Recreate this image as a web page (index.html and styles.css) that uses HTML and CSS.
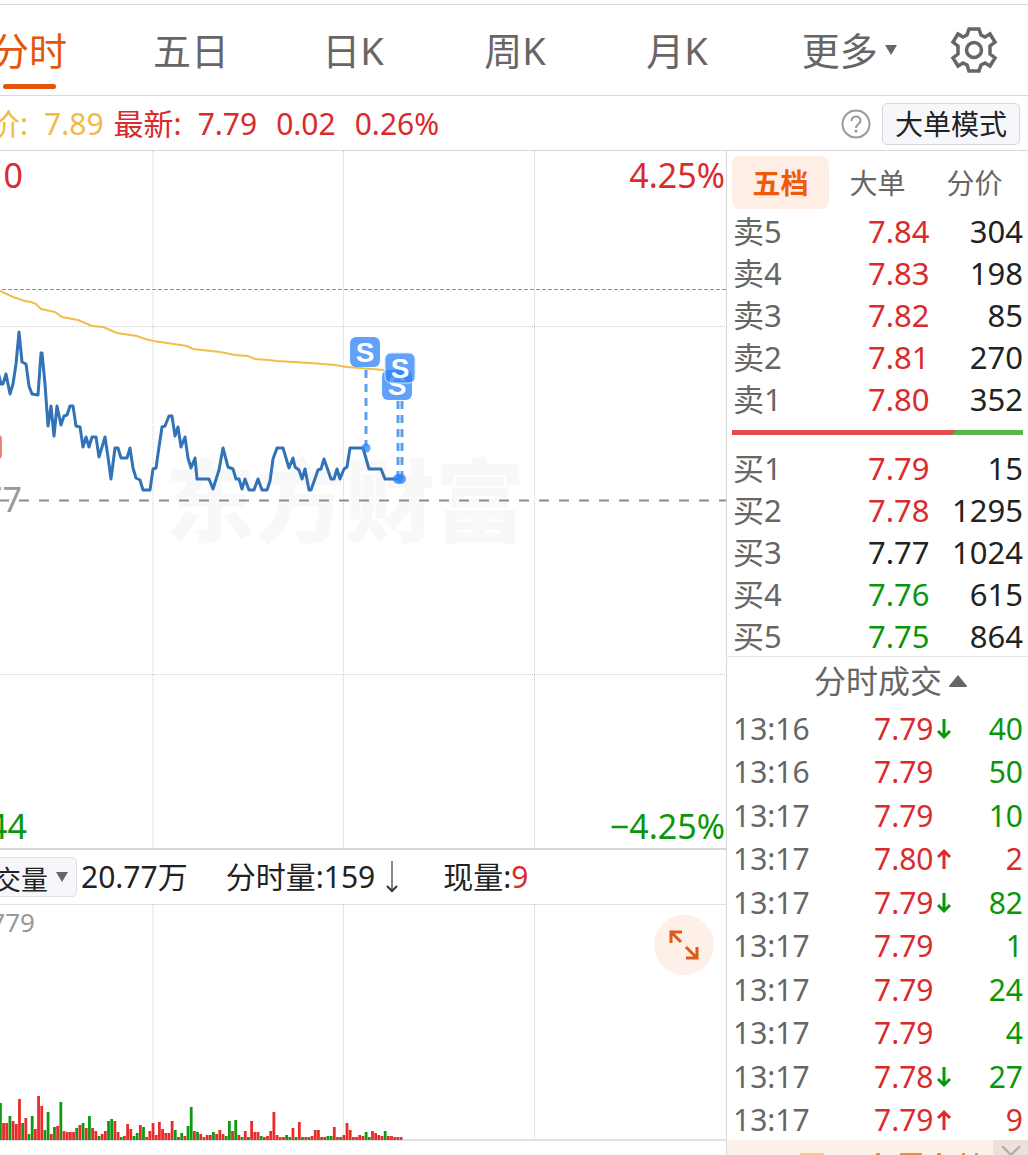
FILE: index.html
```
<!DOCTYPE html>

<html lang="zh-CN">
  <head>
    <meta charset="utf-8" />
    <meta name="viewport" content="width=device-width, initial-scale=1" />
    <title>分时</title>
    <link rel="stylesheet" href="styles.css">
  </head>
  <body>
    <div class="page">
      <nav class="tabs">
        <button class="tab active">分时</button>
        <button class="tab">五日</button>
        <button class="tab">日K</button>
        <button class="tab">周K</button>
        <button class="tab">月K</button>
        <button class="tab">更多<svg class="caret" viewBox="0 0 14 12"><path d="M1 1H13L7 11Z" fill="#666" /></svg></button>
        <button class="tab gear" aria-label="设置">
          <svg viewBox="-24 -24 48 48">
            <path d="M-5 -21H5L7 -15L11 -13L16 -16L21 -8L16 -4V4L21 8L16 16L11 13L7 15L5 21H-5L-7 15L-11 13L-16 16L-21 8L-16 4V-4L-21 -8L-16 -16L-11 -13L-7 -15Z" />
            <circle r="7.5" />
          </svg>
        </button>
      </nav>

      <div class="quote">
        <span class="avg"><span class="label">均价:</span>7.89</span>
        <span class="red"><span class="label">最新:</span>7.79</span>
        <span class="red">0.02</span>
        <span class="red">0.26%</span>
        <button class="help" aria-label="帮助">
          <svg viewBox="0 0 30 30">
            <circle cx="15" cy="15" r="13.5" />
            <path d="M10.500 12C10.500 6 19.500 6 19.500 11.500C19.500 15 15 15 15 19" />
            <circle class="dot" cx="15" cy="22" r="1.600" />
          </svg>
        </button>
        <button class="mode">大单模式</button>
      </div>

      <main class="main">
        <section class="charts">
          <svg class="chart" viewBox="-52 151 778 697">
            <text class="watermark" x="165" y="535">东方财富</text>
            <path class="grid" d="M153 151V848M343.500 151V848M534.500 151V848M-52 326.500H726M-52 674.500H726" />
            <path class="high" d="M-52 289.500H726" />
            <path class="middle" d="M-61 500.500H726" />
            <rect x="-30" y="435" width="32" height="24" rx="4" fill="#f08070" />
            <polyline class="avgLine" points="-4,289 0,291 13,297 25,301 31,302 36,304 41,309 55,312 62,317 78,320 92,326 103,327 117,333 137,336 142,338 153,341 167,343 187,346 193,349 220,352 225,353 235,355 248,356 255,359 268,360 277,361 310,363 335,365 347,367 384,370" />
            <polyline class="priceLine" points="-2,372 1,384 3,384 6,374 10,394 13,384 16,364 19,332 22,362 26,364 29,386 32,394 38,395 41,353 42,353 45,384 48,426 51,406 54,436 57,406 61,425 64,416 67,415 70,406 73,406 76,426 80,427 83,447 86,437 89,447 92,437 96,437 99,457 105,437 108,457 111,479 115,448 118,448 121,458 127,458 130,448 133,468 136,478 140,480 143,490 150,490 153,469 156,468 159,447 162,427 165,426 169,416 172,416 175,436 178,427 181,447 185,437 188,458 191,468 195,458 197,479 209,479 213,489 219,470 223,448 228,467 233,469 236,479 239,479 242,489 245,479 249,490 254,490 258,479 262,490 267,490 270,481 273,459 277,448 283,448 289,468 293,458 295,467 299,470 302,479 305,469 309,490 311,490 318,470 321,469 324,459 331,479 334,479 337,469 340,479 344,469 347,467 350,448 363,448 369,469 381,469 385,479 399,479" />
            <g class="marks">
              <path d="M366 370V446M398 401V478M402 401V478" />
              <circle cx="366" cy="448" r="4.500" />
              <circle cx="398" cy="479" r="5" />
              <circle cx="401" cy="479" r="5" />
              <rect x="350" y="337" width="30" height="30" rx="6" />
              <text x="365" y="362">S</text>
              <rect x="382" y="370" width="30" height="30" rx="6" />
              <text x="397" y="395">S</text>
              <rect class="top" x="385" y="353" width="30" height="30" rx="6" />
              <text x="400" y="378">S</text>
            </g>
            <g class="scale">
              <text class="up" x="23" y="188">8.10</text>
              <text class="up" x="725" y="188">4.25%</text>
              <text class="flat" x="22" y="512">7.77</text>
              <text class="down" x="27" y="839">7.44</text>
              <text class="down" x="725" y="839">−4.25%</text>
            </g>
          </svg>

          <div class="volumeBar">
            <div class="picker">
              <select aria-label="指标">
                <option>成交量</option>
              </select>
              <svg class="caret" viewBox="0 0 14 12"><path d="M1 1H13L7 11Z" fill="#666" /></svg>
            </div>
            <span>20.77万</span>
            <span class="minute">分时量:159<svg viewBox="0 0 14 32"><path d="M7 0V29" /><path class="head" d="M2 25L7 30L12 25" /></svg></span>
            <span>现量:<span class="red">9</span></span>
          </div>

          <div class="volume">
            <svg class="chart" viewBox="-52 905 778 236">
              <path class="grid" d="M153 905V1139M343.500 905V1139M534.500 905V1139" />
              <path class="base" d="M-52 1140H726" />
              <g id="bars"></g>
              <text class="max" x="35" y="932">1779</text>
            </svg>
            <button class="expand" aria-label="全屏">
              <svg viewBox="0 0 32 32">
                <path d="M3 14V3H14M3 3L13 13M29 18V29H18M29 29L18 18" />
              </svg>
            </button>
          </div>
        </section>

        <aside class="side">
          <div class="sideTabs">
            <button class="active">五档</button>
            <button>大单</button>
            <button>分价</button>
          </div>
          <table class="orders">
            <tr><th>卖5</th><td class="red">7.84</td><td>304</td></tr>
            <tr><th>卖4</th><td class="red">7.83</td><td>198</td></tr>
            <tr><th>卖3</th><td class="red">7.82</td><td>85</td></tr>
            <tr><th>卖2</th><td class="red">7.81</td><td>270</td></tr>
            <tr><th>卖1</th><td class="red">7.80</td><td>352</td></tr>
          </table>
          <div class="ratio"></div>
          <table class="orders">
            <tr><th>买1</th><td class="red">7.79</td><td>15</td></tr>
            <tr><th>买2</th><td class="red">7.78</td><td>1295</td></tr>
            <tr><th>买3</th><td>7.77</td><td>1024</td></tr>
            <tr><th>买4</th><td class="green">7.76</td><td>615</td></tr>
            <tr><th>买5</th><td class="green">7.75</td><td>864</td></tr>
          </table>
          <button class="dealsTitle">分时成交<svg viewBox="0 0 20 14"><path d="M10 1L19 12Q19 13 18 13H2Q1 13 1 12Z" fill="#666" /></svg></button>
          <table class="deals">
            <tr><th>13:16</th><td class="red">7.79<svg class="green" viewBox="0 0 16 22"><path d="M8 1V19M2 13L8 19L14 13" /></svg></td><td class="green">40</td></tr>
            <tr><th>13:16</th><td class="red">7.79</td><td class="green">50</td></tr>
            <tr><th>13:17</th><td class="red">7.79</td><td class="green">10</td></tr>
            <tr><th>13:17</th><td class="red">7.80<svg viewBox="0 0 16 22"><path d="M8 21V3M2 9L8 3L14 9" /></svg></td><td class="red">2</td></tr>
            <tr><th>13:17</th><td class="red">7.79<svg class="green" viewBox="0 0 16 22"><path d="M8 1V19M2 13L8 19L14 13" /></svg></td><td class="green">82</td></tr>
            <tr><th>13:17</th><td class="red">7.79</td><td class="green">1</td></tr>
            <tr><th>13:17</th><td class="red">7.79</td><td class="green">24</td></tr>
            <tr><th>13:17</th><td class="red">7.79</td><td class="green">4</td></tr>
            <tr><th>13:17</th><td class="red">7.78<svg class="green" viewBox="0 0 16 22"><path d="M8 1V19M2 13L8 19L14 13" /></svg></td><td class="green">27</td></tr>
            <tr><th>13:17</th><td class="red">7.79<svg viewBox="0 0 16 22"><path d="M8 21V3M2 9L8 3L14 9" /></svg></td><td class="red">9</td></tr>
          </table>
          <div class="banner">
            <svg class="ad" viewBox="0 0 190 2"><path d="M0 1H24" stroke="#fbc38e" /><path d="M76 1H80M100 1H122M137 1H141M162 1H165M175 1H178" stroke="#ee8a45" /></svg>
            <button class="close" aria-label="关闭">
              <svg viewBox="0 0 20 9"><path d="M1 0L10 9L19 0" /></svg>
            </button>
          </div>
        </aside>
      </main>
    </div>
    <script>
      // r = up, g = down, followed by the bar height
      const volumes =
        "g37 r17 r17 g24 r19 r16 r41 g17 r22 g6 g24 r11 r44 r34 g10 g28 r6 g13 r14 g38 " +
        "r9 r8 r8 r8 g12 r15 g17 r12 g24 r12 r9 g4 r6 r9 g19 g21 r19 r8 g3 r4 " +
        "r16 r11 g4 g7 r15 g13 r3 r9 r17 r5 r18 r11 r7 r7 r19 g10 r3 g7 r4 g14 " +
        "g33 r9 g8 r6 r3 r5 r5 g8 r6 r10 r6 g4 g19 r9 g20 r5 g3 r9 g3 r19 " +
        "r8 r8 g4 r3 r4 r9 r28 r5 r3 r3 g5 g3 r12 g3 r18 g3 r3 g3 r4 r10 " +
        "r10 r3 r3 g4 g4 r13 r3 g3 r5 r17 r10 r3 r3 r5 r4 g8 g3 r9 r7 r5 " +
        "r4 g9 r4 r4 r3 r3 r3";

      const bars = document.getElementById("bars");
      volumes.split(" ").forEach((item, i) => {
        const height = Number(item.slice(1));
        const rect = document.createElementNS("http://www.w3.org/2000/svg", "rect");
        rect.setAttribute("x", i * 3.18 - 1);
        rect.setAttribute("y", 1140 - height);
        rect.setAttribute("width", 2.8);
        rect.setAttribute("height", height);
        rect.setAttribute("fill", item[0] === "r" ? "#e82c2c" : "#0f9a12");
        bars.appendChild(rect);
      });
    </script>
  </body>
</html>
```
FILE: styles.css
```
* {
  box-sizing: border-box;
}

body {
  margin: 0;
  background: #fff;
  color: #222;
  font-family: "Noto Sans", "Noto Sans CJK SC", sans-serif;
  font-size: 30px;
  overflow-x: hidden;
}

button,
select {
  border: none;
  padding: 0;
  background: none;
  color: #666;
  font: inherit;
}

svg {
  fill: none;
}

/* the left edge of the page is scrolled out of view */
.page {
  margin-left: -52px;
  padding-top: 4px;
}

.red {
  color: #d92b2b;
}

.green {
  color: #0a960a;
}

.caret {
  width: 14px;
  height: 12px;
}

.tabs {
  display: grid;
  grid-template-columns: repeat(5, 15%) 17% 6%;
  height: 92px;
  border-top: 1px solid #d8d8d8;
  border-bottom: 1px solid #d8d8d8;
}

.tab {
  display: flex;
  flex-direction: column;
  align-items: center;
  justify-content: center;
  font-size: 38px;
  line-height: 56px;
  white-space: nowrap;
}

.tab:nth-child(6) {
  flex-direction: row;
  gap: 6px;
}

.tab.active {
  color: #e2570c;
  padding-top: 10px;
}

.tab.active::after {
  content: "";
  width: 53px;
  height: 5px;
  margin-top: 6px;
  border-radius: 3px;
  background: #e2570c;
}

.gear svg {
  width: 48px;
  height: 48px;
  stroke: #666;
  stroke-width: 3.5;
}

.quote {
  display: flex;
  align-items: center;
  gap: 19px;
  height: 55px;
  padding: 1px 8px 0 12px;
  border-bottom: 1px solid #d8d8d8;
  line-height: 44px;
}

.avg {
  margin-right: -9px;
  color: #f0bb45;
}

.label {
  margin-right: 16px;
}

.help {
  width: 30px;
  height: 30px;
  margin: 0 -8px 0 auto;
}

.help svg {
  display: block;
  stroke: #999;
  stroke-width: 2;
}

.help .dot {
  fill: #999;
  stroke: none;
}

.mode {
  height: 42px;
  padding: 0 12px;
  border: 1px solid #d4d7dd;
  border-radius: 5px;
  background: #f6f7fb;
  color: #222;
  font-size: 28px;
  line-height: 40px;
}

.main {
  display: grid;
  grid-template-columns: 1fr 302px;
}

.chart {
  display: block;
  width: 100%;
}

.grid {
  stroke: #ccc;
  stroke-dasharray: 1 1;
}

.high {
  stroke: #e8742e;
  stroke-dasharray: 4 2;
}

.middle {
  stroke: #8c8c8c;
  stroke-width: 2;
  stroke-dasharray: 10 10;
}

.watermark {
  fill: #f8f8f8;
  font-size: 90px;
  font-weight: 900;
}

.avgLine {
  stroke: #f2bd4b;
  stroke-width: 2;
}

.priceLine {
  stroke: #3273b8;
  stroke-width: 3;
  stroke-linejoin: round;
}

.marks {
  fill: #2c82fb;
  fill-opacity: 0.75;
}

.marks path {
  stroke: #5a9ff0;
  stroke-width: 3;
  stroke-dasharray: 8 6;
}

.marks .top {
  stroke: #d5e6ff;
}

.marks text {
  fill: #fff;
  fill-opacity: 1;
  font-family: "Liberation Sans", sans-serif;
  font-size: 28px;
  font-weight: bold;
  text-anchor: middle;
}

.scale {
  font-size: 34px;
  text-anchor: end;
}

.up {
  fill: #d92b2b;
}

.flat {
  fill: #999;
}

.down {
  fill: #0a960a;
}

.volumeBar {
  display: flex;
  align-items: center;
  height: 57px;
  padding-left: 8px;
  border-top: 2px solid #d8d8d8;
  border-bottom: 1px solid #e0e0e0;
  line-height: 44px;
  white-space: nowrap;
}

.volumeBar > span {
  margin-right: 38px;
}

.picker {
  position: relative;
  margin-right: 4px;
}

.picker select {
  display: block;
  width: 121px;
  height: 40px;
  padding-left: 10px;
  appearance: none;
  border: 1px solid #dfe1e6;
  border-radius: 5px;
  background: #f6f7fb;
  color: #222;
  font-size: 27px;
}

.picker .caret {
  position: absolute;
  top: 14px;
  right: 8px;
}

.minute {
  display: flex;
  align-items: center;
}

.minute svg {
  width: 14px;
  height: 32px;
  margin: 0 6px 0 10px;
  stroke: #888;
  stroke-width: 2;
}

.minute .head {
  stroke: #333;
}

.volume {
  position: relative;
}

.base {
  stroke: #e3e3e3;
  stroke-width: 2;
}

.max {
  fill: #999;
  font-size: 26px;
  text-anchor: end;
}

.expand {
  position: absolute;
  top: 10px;
  right: 12px;
  width: 60px;
  height: 60px;
  padding: 14px;
  border-radius: 50%;
  background: #fef0e8;
}

.expand svg {
  display: block;
  stroke: #dd5b16;
  stroke-width: 3;
}

.side {
  border-left: 1px solid #d8d8d8;
}

.sideTabs {
  display: grid;
  grid-template-columns: repeat(3, 97px);
  padding: 5px 5px 0;
}

.sideTabs button {
  height: 53px;
  border-radius: 8px;
  font-size: 28px;
  line-height: 50px;
}

.sideTabs .active {
  background: #feeee5;
  color: #ef5a0c;
  font-weight: bold;
}

table {
  width: 100%;
  border-collapse: collapse;
  table-layout: fixed;
}

th,
td {
  padding: 0;
  font-weight: normal;
  text-align: left;
  white-space: nowrap;
}

th {
  padding-left: 6px;
  color: #666;
}

td:last-child {
  width: 78px;
  padding-right: 5px;
  text-align: right;
}

.orders {
  font-size: 31px;
  line-height: 40px;
}

.orders th,
.orders td {
  padding-top: 2px;
}

.orders th {
  width: 141px;
}

.ratio {
  height: 5px;
  margin: 11px 5px;
  background: linear-gradient(135deg, #e34d4d 76%, #5db54a 76%);
}

.dealsTitle {
  display: flex;
  align-items: center;
  justify-content: center;
  width: 100%;
  height: 49px;
  padding-left: 27px;
  border-top: 1px solid #e5e5e5;
  font-size: 32px;
  line-height: 46px;
}

.dealsTitle svg {
  width: 20px;
  height: 14px;
  margin-left: 6px;
}

.deals {
  height: 435px;
  line-height: 38px;
}

.deals th,
.deals td {
  padding-top: 4px;
}

.deals th {
  width: 147px;
}

.deals svg {
  width: 16px;
  height: 22px;
  margin-left: 2px;
  stroke: currentColor;
  stroke-width: 3;
}

.banner {
  display: flex;
  align-items: flex-end;
  justify-content: flex-end;
  gap: 3px;
  background: #fdf0ea;
}

.ad {
  width: 190px;
  height: 2px;
  stroke-width: 2;
}

.close {
  display: flex;
  align-items: flex-end;
  justify-content: center;
  width: 35px;
  height: 15px;
  background: #ebe0da;
}

.close svg {
  width: 20px;
  height: 9px;
  stroke: #aaa;
  stroke-width: 2;
}
```
